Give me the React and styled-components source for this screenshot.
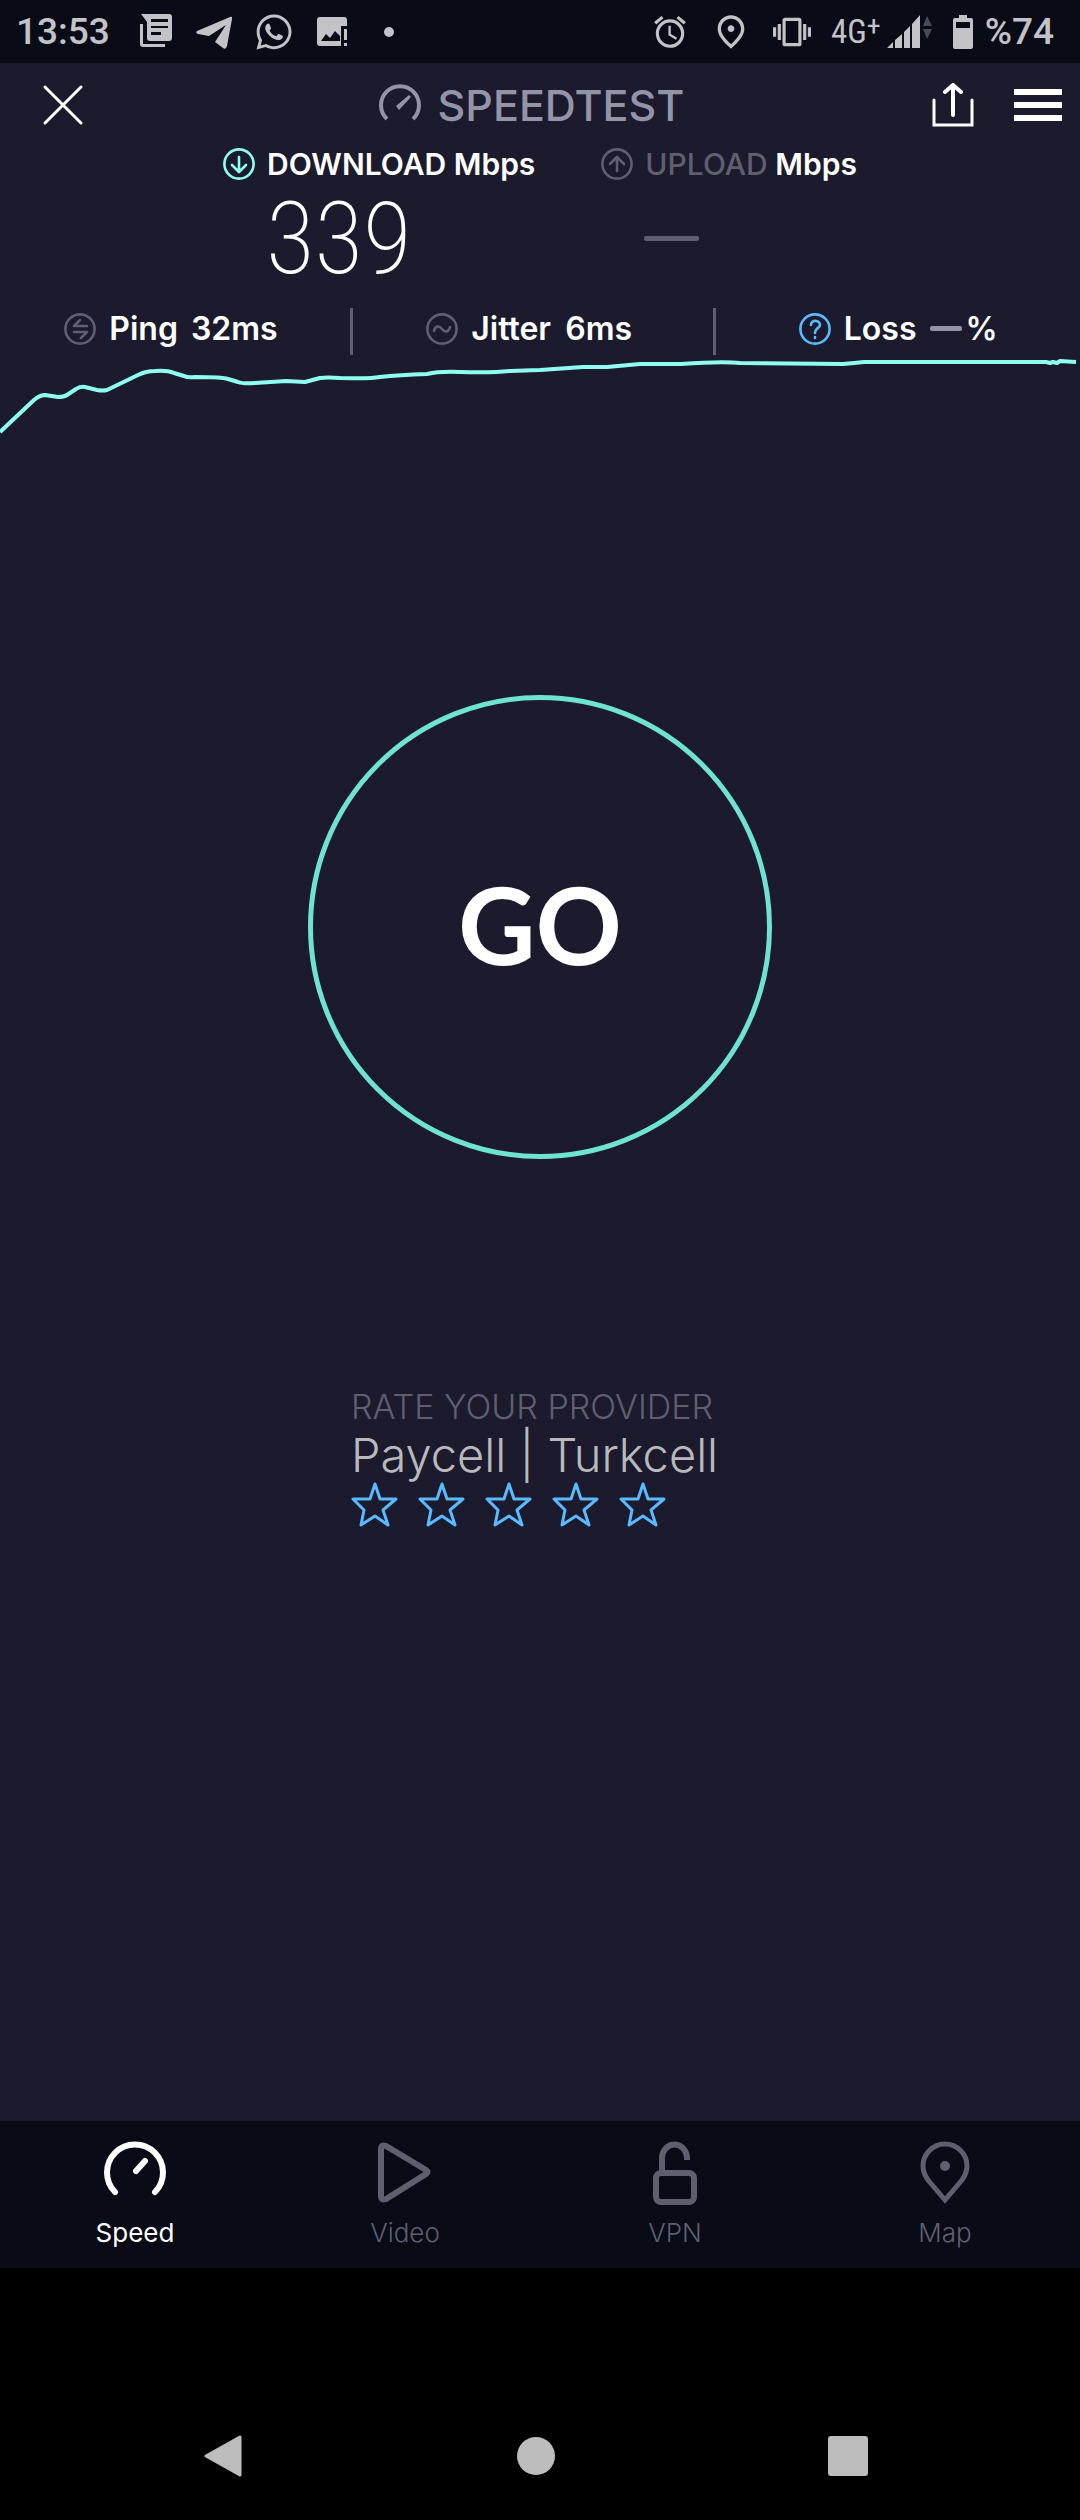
import React from "react";
//Importing Styles
import styled, { createGlobalStyle } from "styled-components";
//Importing icons
import { MdAlarm, MdOutlinePlace, MdVibration } from "react-icons/md";
import { FaWhatsapp } from "react-icons/fa";

const App = () => {
  return (
    <Page>
      <GlobalStyle />
      <StatusBar />
      <Header />
      <main>
        <Speeds />
        <Quality />
        <SpeedGraph />
        <GoButton type="button">GO</GoButton>
        <Rating />
      </main>
      <TabBar />
      <SystemBar />
    </Page>
  );
};

const StatusBar = () => (
  <Status>
    <Clock>13:53</Clock>
    <StatusIcons>
      <svg width="36" height="36" viewBox="0 0 36 36" fill="currentColor">
        <path d="M5 10v20h22v3H5q-3 0-3-3V10z" />
        <path
          fillRule="evenodd"
          d="M3 0h28q3 0 3 3v21q0 3-3 3H12q-3 0-3-3V8zM13 5h17v3H13zM13 12h17v2H13zM13 18h10v3H13z"
        />
      </svg>
      <svg width="36" height="36" viewBox="0 0 36 36" fill="currentColor">
        <path d="M1 17 34 3q3-1 2 2l-5 27q-1 4-4 2l-8-6 11-17L13 22 2 20q-3-1-1-3z" />
      </svg>
      <FaWhatsapp size={40} />
      <svg width="36" height="36" viewBox="0 0 36 36" fill="currentColor">
        <path
          fillRule="evenodd"
          d="M4 3h24q3 0 3 3v6h-6v20H4q-3 0-3-3V6q0-3 3-3zM5 27h19v-5l-5-5-5 7-4-4z"
        />
        <path d="M28 15h3v11h-3zM28 29h3v3h-3z" />
      </svg>
      <svg width="36" height="36" viewBox="0 0 36 36" fill="currentColor">
        <circle cx="15" cy="18" r="5" />
      </svg>
    </StatusIcons>
    <StatusIcons $right>
      <MdAlarm size={38} />
      <MdOutlinePlace size={40} />
      <MdVibration size={38} />
    </StatusIcons>
    <Network>
      4G<sup>+</sup>
    </Network>
    <svg width="46" height="36" viewBox="0 0 46 36" fill="currentColor">
      <path d="M0 34l6-6v6zM8 26l7-6v14H8zM17 18l6-6v22h-6zM25 10l8-9v33h-8z" />
      <path d="M36 12l4-10 5 10zM36 15h9l-5 10z" opacity=".35" />
    </svg>
    <Battery width="20" height="36" viewBox="0 0 20 36" fill="currentColor">
      <path
        fillRule="evenodd"
        d="M6 1h8v3h4q2 0 2 2v27q0 2-2 2H2q-2 0-2-2V6q0-2 2-2h4zM3 8v6h14V8z"
      />
    </Battery>
    <Clock as="span">%74</Clock>
  </Status>
);

const Header = () => (
  <TopBar>
    <CloseButton type="button" aria-label="Close">
      <svg width="42" height="42" viewBox="0 0 42 42">
        <path d="M3 3l36 36M39 3L3 39" strokeWidth="3" />
      </svg>
    </CloseButton>
    <Logo>
      <svg width="44" height="44" viewBox="0 0 44 44">
        <path d="M9 36A19 19 0 1 1 35 36" strokeWidth="4" strokeLinecap="butt" />
        <path
          d="M18 23 31 12l2 2-12 13z"
          fill="currentColor"
          stroke="none"
        />
      </svg>
      SPEEDTEST
    </Logo>
    <Actions>
      <IconButton type="button" aria-label="Share">
        <svg width="42" height="44" viewBox="0 0 42 44">
          <path d="M2 17v25h38V17" strokeWidth="3" />
          <path d="M21 32V3M13 9l8-7 8 7" strokeWidth="4" />
        </svg>
      </IconButton>
      <IconButton type="button" aria-label="Menu">
        <svg width="48" height="36" viewBox="0 0 48 36">
          <path d="M0 5h48M0 18h48M0 31h48" strokeWidth="6" />
        </svg>
      </IconButton>
    </Actions>
  </TopBar>
);

const CircleIcon = ({ children, color }) => (
  <Circle viewBox="0 0 32 32" $color={color}>
    <circle cx="16" cy="16" r="14.6" />
    {children}
  </Circle>
);

const Speeds = () => (
  <SpeedRow>
    <div>
      <SpeedLabel>
        <CircleIcon color="#8ffff1">
          <path d="M16 9v14M9 17l7 7 7-7" />
        </CircleIcon>
        <span>DOWNLOAD Mbps</span>
      </SpeedLabel>
      <SpeedValue>339</SpeedValue>
    </div>
    <div>
      <SpeedLabel>
        <CircleIcon color="#5f5f70">
          <path d="M16 23V9M9 16l7-7 7 7" />
        </CircleIcon>
        <span>
          <Muted>UPLOAD</Muted> Mbps
        </span>
      </SpeedLabel>
      <SpeedValue>
        <Dash $width={55} $color="#5f5f70" />
      </SpeedValue>
    </div>
  </SpeedRow>
);

const Quality = () => (
  <QualityRow>
    <QualityItem>
      <CircleIcon color="#5f5f70">
        <path d="M16 7l-6 6h13M10 19h13l-6 6" />
      </CircleIcon>
      <span>Ping</span>
      <QualityValue>32ms</QualityValue>
    </QualityItem>
    <QualityItem>
      <CircleIcon color="#5f5f70">
        <path d="M8 18c1-5 5-6 8-2s7 3 8-2" />
      </CircleIcon>
      <span>Jitter</span>
      <QualityValue>6ms</QualityValue>
    </QualityItem>
    <QualityItem>
      <CircleIcon color="#5ab9ff">
        <path d="M12 12c0-6 9-5 9 0 0 3-5 3-5 8M16 24v1" />
      </CircleIcon>
      <span>Loss</span>
      <QualityValue>
        <Dash $width={32} $color="#9494a9" />%
      </QualityValue>
    </QualityItem>
  </QualityRow>
);

const SpeedGraph = () => (
  <Graph viewBox="0 0 1080 80" preserveAspectRatio="none">
    <path
      d="M0 77L34 45Q40 40 45 40L58 42Q64 42 67 40L76 34Q80 31 85 32L97 35Q102 36 107 35
      L138 20Q146 16 155 16Q167 15 174 18L184 21Q188 23 195 22Q222 22 228 24L238 27
      Q243 29 255 28L286 26L305 27L320 23Q327 22 340 23Q370 24 380 22Q399 20 427 19
      Q440 16 460 17Q492 18 510 16L540 15L583 12L607 12L640 9H681Q722 6 740 8L843 9
      Q855 8 864 7H1046L1050 8L1053 7L1057 8L1060 6L1076 7"
    />
  </Graph>
);

const Rating = () => (
  <RatingBox>
    <RatingTitle>RATE YOUR PROVIDER</RatingTitle>
    <Provider>Paycell | Turkcell</Provider>
    <Stars>
      {[1, 2, 3, 4, 5].map((star) => (
        <IconButton
          type="button"
          key={star}
          aria-label={`Rate ${star} out of 5`}
        >
          <svg width="47" height="45" viewBox="0 0 47 45">
            <path
              d="M24 2l5 15h16L32 28l5 15-13-9-14 9 3-15L2 17h17z"
              strokeWidth="3"
            />
          </svg>
        </IconButton>
      ))}
    </Stars>
  </RatingBox>
);

const TabBar = () => (
  <Tabs>
    <Tab href="#speed" $active>
      <svg width="66" height="66" viewBox="0 0 66 66">
        <path d="M13 53A28 28 0 1 1 53 53M34 32l9-10" strokeWidth="6" />
      </svg>
      Speed
    </Tab>
    <Tab href="#video">
      <svg width="66" height="66" viewBox="0 0 66 66">
        <path
          d="M9 10v47q0 5 5 3l40-25q3-2 0-4L14 7q-5-2-5 3z"
          strokeWidth="6"
        />
      </svg>
      Video
    </Tab>
    <Tab href="#vpn">
      <svg width="66" height="66" viewBox="0 0 66 66">
        <rect x="14" y="34" width="38" height="29" rx="5" strokeWidth="6" />
        <path
          d="M20 34V19a12 13 0 0 1 25 0v2"
          strokeWidth="6"
          strokeLinecap="butt"
        />
      </svg>
      VPN
    </Tab>
    <Tab href="#map">
      <svg width="66" height="66" viewBox="0 0 66 66">
        <path
          d="M33 61L16 41C11 34 11 29 11 27a22 22 0 0 1 44 0c0 2 0 7-5 14z"
          strokeWidth="5"
          strokeLinejoin="miter"
        />
        <circle cx="33" cy="27" r="5" fill="currentColor" stroke="none" />
      </svg>
      Map
    </Tab>
  </Tabs>
);

const SystemBar = () => (
  <System>
    <IconButton type="button" aria-label="Back">
      <svg width="42" height="42" viewBox="0 0 42 42">
        <path
          d="M37 2v38L3 21z"
          fill="currentColor"
          strokeWidth="3"
        />
      </svg>
    </IconButton>
    <IconButton type="button" aria-label="Home">
      <svg width="42" height="42" viewBox="0 0 42 42">
        <circle cx="21" cy="21" r="19" fill="currentColor" stroke="none" />
      </svg>
    </IconButton>
    <IconButton type="button" aria-label="Recent apps">
      <svg width="42" height="42" viewBox="0 0 42 42">
        <rect
          x="1"
          y="1"
          width="40"
          height="40"
          rx="3"
          fill="currentColor"
          stroke="none"
        />
      </svg>
    </IconButton>
  </System>
);

const GlobalStyle = createGlobalStyle`
  * {
    margin: 0;
    padding: 0;
    box-sizing: border-box;
  }

  body {
    background: #000;
    color: #fff;
    font-family: "Inter", "Liberation Sans", sans-serif;
  }

  svg {
    display: block;
    flex-shrink: 0;
  }
`;

const Page = styled.div`
  min-height: 100vh;
  display: flex;
  flex-direction: column;

  main {
    flex: 1;
    display: flex;
    flex-direction: column;
    align-items: center;
    background: #1b1b2d;
  }
`;

const Status = styled.div`
  height: 63px;
  padding: 0 26px 0 16px;
  display: flex;
  align-items: center;
  background: #090b17;
  color: #c3c2c7;
`;

const Clock = styled.time`
  font: 500 37px "Roboto", sans-serif;
`;

const StatusIcons = styled.div`
  display: flex;
  align-items: center;
  gap: 22px;
  margin-left: ${({ $right }) => ($right ? "auto" : "28px")};
`;

const Network = styled.span`
  margin: 0 6px 0 20px;
  display: flex;
  font: 400 33px "Roboto Condensed", "Roboto", sans-serif;

  sup {
    font-size: 28px;
    line-height: 28px;
  }
`;

const Battery = styled.svg`
  margin: 0 12px 0 20px;
`;

const TopBar = styled.header`
  height: 84px;
  padding-right: 18px;
  display: grid;
  grid-template-columns: 1fr auto 1fr;
  align-items: center;
  background: #1b1b2d;

  svg {
    fill: none;
    stroke: currentColor;
    stroke-linecap: round;
  }
`;

const IconButton = styled.button`
  display: flex;
  background: none;
  border: none;
  color: inherit;
  cursor: pointer;
`;

const CloseButton = styled(IconButton)`
  width: 126px;
  justify-content: center;
`;

const Logo = styled.h1`
  display: flex;
  align-items: center;
  gap: 16px;
  color: #9494a9;
  font-size: 43px;
  font-weight: 500;
`;

const Actions = styled.div`
  display: flex;
  align-items: center;
  justify-content: flex-end;
  gap: 40px;

  //Butt ends for the flat menu bars
  button:last-child svg {
    stroke-linecap: butt;
  }
`;

const Circle = styled.svg`
  width: 32px;
  height: 32px;
  fill: none;
  stroke: ${({ $color }) => $color};
  stroke-width: 2.6;
  stroke-linecap: round;
  stroke-linejoin: round;
`;

const SpeedRow = styled.section`
  display: flex;
  justify-content: center;
  gap: 66px;
`;

const SpeedLabel = styled.div`
  height: 34px;
  display: flex;
  align-items: center;
  gap: 12px;
  font-size: 30px;
  font-weight: 600;
`;

const Muted = styled.span`
  color: #5f5f70;
  font-weight: 500;
`;

const SpeedValue = styled.div`
  height: 127px;
  padding-left: 43px;
  padding-bottom: 12px;
  display: flex;
  align-items: center;
  font: 200 100px "Roboto Condensed", "Roboto", sans-serif;
  line-height: 100px;
`;

const Dash = styled.i`
  width: ${({ $width }) => $width}px;
  height: 5px;
  border-radius: 2px;
  background: ${({ $color }) => $color};
`;

const QualityRow = styled.section`
  width: 100%;
  display: grid;
  grid-template-columns: 33fr 34fr 34fr;
`;

const QualityItem = styled.div`
  height: 47px;
  padding-bottom: 6px;
  display: flex;
  align-items: center;
  justify-content: center;
  gap: 13px;
  font-size: 32px;
  font-weight: 600;

  &:not(:last-child) {
    padding-right: 8px;
    border-right: 3px solid #5f5f70;
  }
`;

const QualityValue = styled.span`
  min-width: 68px;
  display: flex;
  align-items: center;
  justify-content: flex-end;
  gap: 4px;
`;

const Graph = styled.svg`
  width: 100%;
  height: 80px;
  fill: none;
  stroke: #8ffff1;
  stroke-width: 4;
  stroke-linejoin: round;
`;

const GoButton = styled.button`
  width: 464px;
  height: 464px;
  margin: 260px 0 227px;
  padding-bottom: 8px;
  border: 5px solid #6ee3d2;
  border-radius: 50%;
  background: none;
  color: #fff;
  font: 700 107px "Lato", sans-serif;
  cursor: pointer;
`;

const RatingBox = styled.section`
  width: 378px;
  padding-bottom: 48px;
  white-space: nowrap;
`;

const RatingTitle = styled.h2`
  color: #5f5f70;
  font-size: 34px;
  font-weight: 300;
  line-height: 42px;
`;

const Provider = styled.p`
  color: #b9b9bd;
  font-size: 47px;
  font-weight: 300;
  line-height: 54px;
`;

const Stars = styled.div`
  display: flex;
  gap: 20px;

  svg {
    fill: none;
    stroke: #5ab9ff;
    stroke-linejoin: round;
  }
`;

const Tabs = styled.nav`
  height: 147px;
  display: grid;
  grid-template-columns: repeat(4, 1fr);
  background: #090b17;
`;

const Tab = styled.a`
  padding-top: 18px;
  display: flex;
  flex-direction: column;
  align-items: center;
  gap: 12px;
  color: ${({ $active }) => ($active ? "#fff" : "#5f5f70")};
  font-size: 26px;
  font-weight: ${({ $active }) => ($active ? 400 : 300)};
  line-height: 32px;
  text-decoration: none;

  svg {
    fill: none;
    stroke: currentColor;
    stroke-linecap: round;
  }
`;

const System = styled.footer`
  height: 252px;
  padding: 167px 76px 0 68px;
  display: grid;
  grid-template-columns: repeat(3, 1fr);
  justify-items: center;
  align-items: start;
  background: #000;
  color: #bdbdbd;

  svg {
    stroke: currentColor;
    stroke-linejoin: round;
  }
`;

export default App;
